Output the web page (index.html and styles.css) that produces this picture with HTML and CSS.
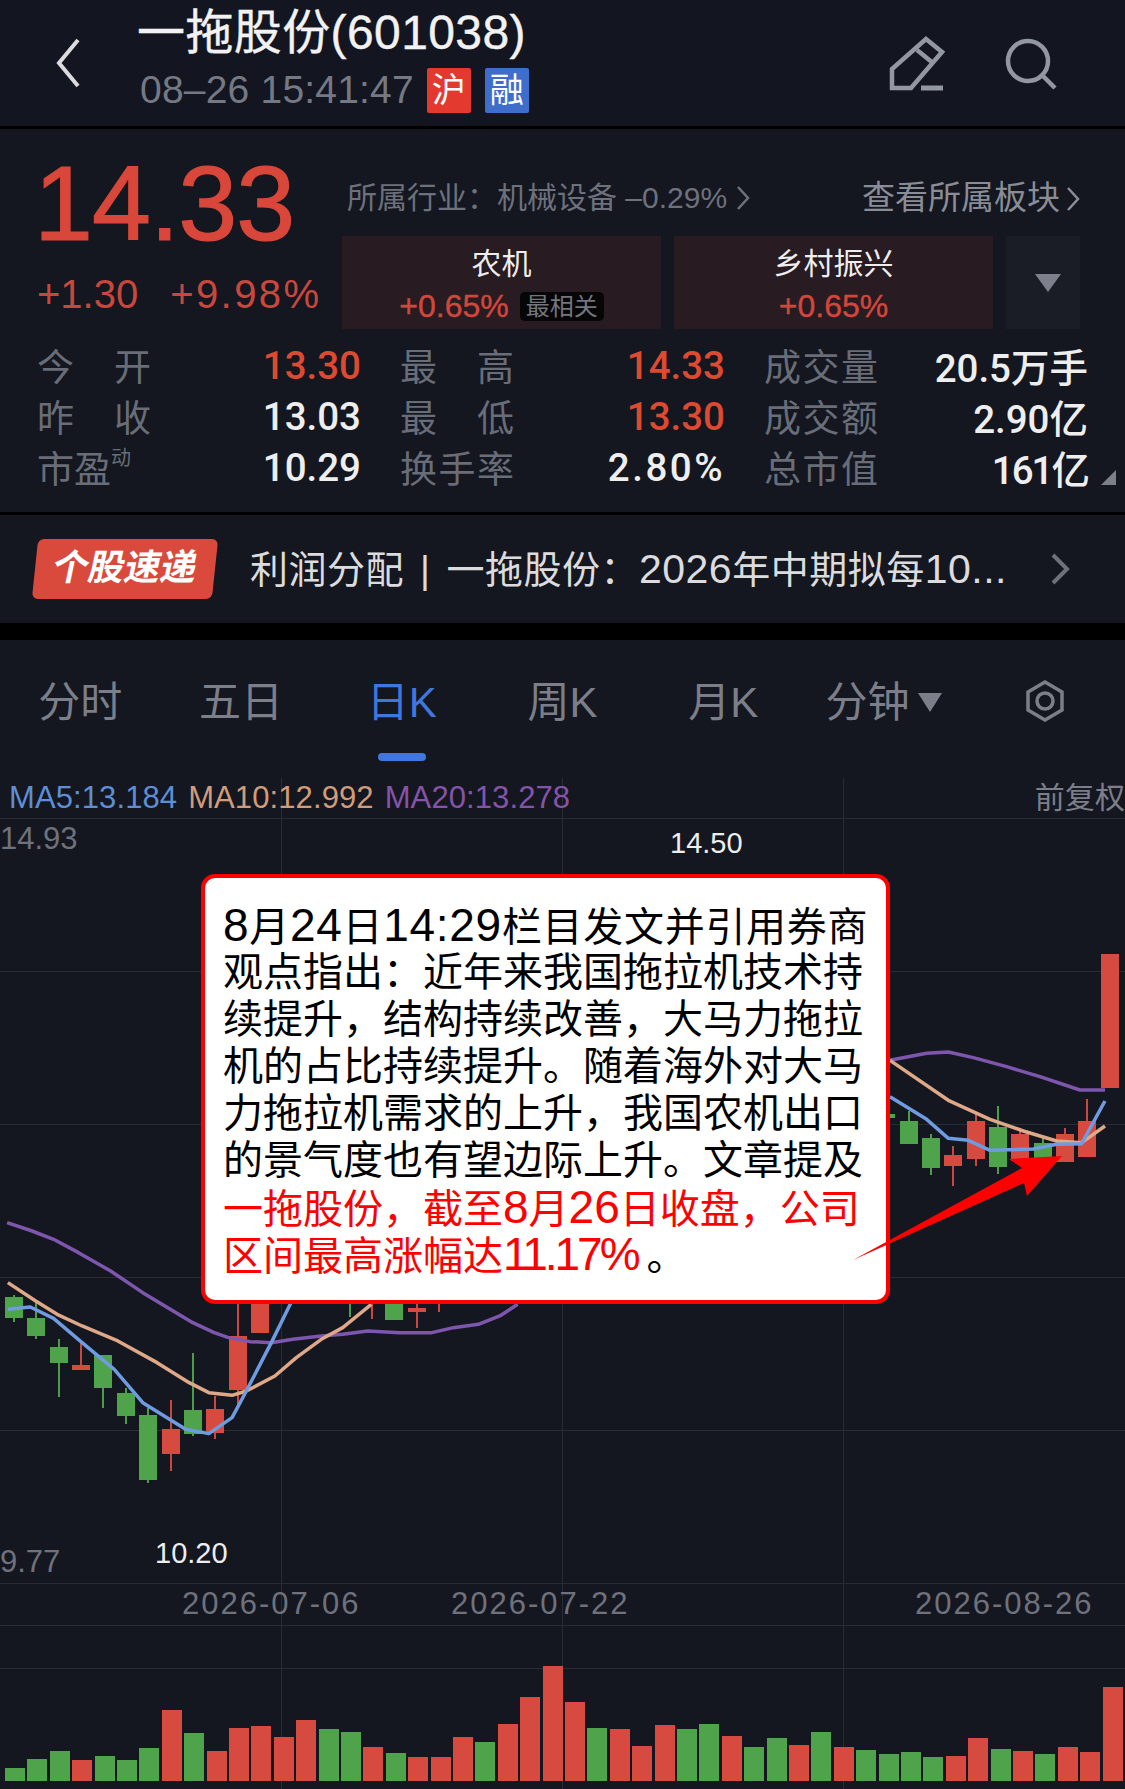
FILE: index.html

```html
<!DOCTYPE html>
<html lang="zh-CN">
<head>
  <meta charset="utf-8">
  <link rel="stylesheet" href="styles.css">
</head>
<body>
  <div class="page">
    <header class="topbar">
      <svg class="back-icon" width="24" height="50" viewBox="0 0 24 50"><path d="M22 2L3 25l19 23"/></svg>
      <div class="title-block">
        <div class="stock-name">一拖股份(601038)</div>
        <div class="stock-time">
          <span>08–26 15:41:47</span>
          <span class="tag tag-red">沪</span>
          <span class="tag tag-blue">融</span>
        </div>
      </div>
      <svg class="edit-icon" width="56" height="56" viewBox="0 0 56 56"><path d="M37 3L53 16 22 52H3V33z"/><path d="M28 14l16 13"/><path d="M32 52h22" class="thick"/></svg>
      <svg class="search-icon" width="52" height="52" viewBox="0 0 52 52"><circle cx="23" cy="23" r="20"/><path d="M38 38l12 12"/></svg>
    </header>

    <section class="quote">
      <div class="hero">
        <div class="price-col">
          <div class="price">14.33</div>
          <div class="change"><span>+1.30</span><span class="change-pct">+9.98%</span></div>
        </div>
        <div class="info-col">
          <div class="industry-row">
            <span class="industry">所属行业&#65306;机械设备 –0.29%<svg class="mini-chevron" width="14" height="26" viewBox="0 0 14 26"><path d="M2 2l10 11L2 24"/></svg></span>
            <span class="sector-link">查看所属板块<svg class="mini-chevron" width="14" height="26" viewBox="0 0 14 26"><path d="M2 2l10 11L2 24"/></svg></span>
          </div>
          <div class="sector-cards">
            <div class="sector-card">
              <div class="sector-name">农机</div>
              <div class="sector-pct">+0.65%<span class="best-tag">最相关</span></div>
            </div>
            <div class="sector-card">
              <div class="sector-name">乡村振兴</div>
              <div class="sector-pct">+0.65%</div>
            </div>
            <div class="sector-more"><span class="tri-down"></span></div>
          </div>
        </div>
      </div>

      <div class="stats">
        <div class="stat"><span class="stat-label spread"><i>今</i><i>开</i></span><span class="stat-value red">13.30</span></div>
        <div class="stat"><span class="stat-label spread"><i>最</i><i>高</i></span><span class="stat-value red">14.33</span></div>
        <div class="stat"><span class="stat-label spread"><i>成</i><i>交</i><i>量</i></span><span class="stat-value">20.5万手</span></div>
        <div class="stat"><span class="stat-label spread"><i>昨</i><i>收</i></span><span class="stat-value">13.03</span></div>
        <div class="stat"><span class="stat-label spread"><i>最</i><i>低</i></span><span class="stat-value red">13.30</span></div>
        <div class="stat"><span class="stat-label spread"><i>成</i><i>交</i><i>额</i></span><span class="stat-value">2.90亿</span></div>
        <div class="stat"><span class="stat-label">市盈<sup>动</sup></span><span class="stat-value">10.29</span></div>
        <div class="stat"><span class="stat-label spread"><i>换</i><i>手</i><i>率</i></span><span class="stat-value wide">2.80%</span></div>
        <div class="stat"><span class="stat-label spread"><i>总</i><i>市</i><i>值</i></span><span class="stat-value narrow">161亿</span></div>
      </div>
      <span class="corner-mark"></span>
    </section>

    <section class="news">
      <div class="news-badge"><span>个股速递</span></div>
      <div class="news-text">利润分配<span class="news-sep">|</span>一拖股份&#65306;<span class="news-num">2026</span>年中期拟每<span class="news-num">10...</span></div>
      <svg class="news-chevron" width="20" height="32" viewBox="0 0 20 32"><path d="M3 2l14 14L3 30"/></svg>
    </section>

    <section class="kline">
      <nav class="tabs">
        <div class="tab">分时</div>
        <div class="tab">五日</div>
        <div class="tab active">日K</div>
        <div class="tab">周K</div>
        <div class="tab">月K</div>
        <div class="tab">分钟<span class="tab-caret"></span></div>
        <div class="tab">
          <svg class="hex-icon" width="40" height="42" viewBox="0 0 40 42"><path d="M20 2l17 10v18L20 40 3 30V12z"/><circle cx="20" cy="21" r="8"/></svg>
        </div>
      </nav>
      <div class="tab-line"></div>

      <div class="chart">
        <svg class="chart-svg" width="1125" height="1012" viewBox="0 777 1125 1012">
          <path class="grid" d="M0 817.5H1125M0 970.5H1125M0 1123.5H1125M0 1276.5H1125M0 1429.5H1125M0 1582.5H1125M0 1624.5H1125M0 1667.5H1125M281.5 777V1789M562.5 777V1789M843.5 777V1789"/>

          <!-- candles -->
          <path class="wick-down" d="M14 1294V1321M36 1302V1338M59 1338V1396M103 1354V1407M126 1387V1423M148 1407V1482M193 1352V1435M350 1290V1316M909 1110V1143M931 1133V1174M998 1105V1173M1043 1137V1160"/>
          <path class="wick-up" d="M81 1340V1369M171 1399V1470M215 1395V1438M238 1290V1407M372 1290V1318M417 1290V1327M439 1290V1311M953 1145V1185M976 1113V1165M1020 1130V1160M1065 1127V1161M1087 1098V1156"/>
          <path class="down" d="M5 1296h18v21H5zM27 1317h18v18H27zM50 1346h18v16H50zM94 1354h18v33H94zM117 1392h18v23h-18zM139 1414h18v65h-18zM184 1409h18v24h-18zM385 1290h18v29h-18zM877 1113h18v4h-18zM900 1120h18v23h-18zM922 1137h18v30h-18zM989 1126h18v40h-18zM1034 1142h18v18h-18z"/>
          <path class="up" d="M72 1364h18v5H72zM162 1428h18v25h-18zM206 1408h18v24h-18zM229 1335h18v54h-18zM251 1280h18v52h-18zM408 1307h18v4h-18zM944 1154h18v11h-18zM967 1120h18v38h-18zM1011 1133h18v27h-18zM1056 1133h18v28h-18zM1078 1120h18v36h-18zM1101 953h18v134h-18z"/>

          <!-- moving averages, left part -->
          <g transform="translate(0 1180) scale(.357 .3333)">
            <polyline class="ma ma20" points="20,125 90,150 150,175 220,215 310,270 400,335 470,380 540,425 600,455 640,470 700,482 760,485 820,475 900,465 960,460 1030,450 1120,455 1210,455 1270,440 1340,430 1400,405 1450,370"/>
            <polyline class="ma ma10" points="22,305 100,360 160,400 230,435 330,480 440,545 530,605 585,635 650,643 690,630 770,585 830,530 900,475 960,440 1040,370"/>
            <polyline class="ma ma5" points="22,385 85,378 150,412 230,485 320,565 400,665 460,705 520,745 585,758 650,710 690,630 760,485 815,365"/>
          </g>
          <!-- moving averages, right part -->
          <g transform="translate(840 930) scale(.3333)">
            <polyline class="ma ma20" points="150,388 260,367 325,363 400,380 500,407 600,437 720,477 795,477"/>
            <polyline class="ma ma10" points="150,388 325,508 450,565 550,600 650,630 725,635 795,585"/>
            <polyline class="ma ma5" points="150,497 260,565 325,622 385,628 450,658 580,654 650,640 725,638 795,510"/>
          </g>

          <!-- volume -->
          <path class="up" d="M72 1759h20V1780h-20zM162 1709h20V1780h-20zM207 1750h20V1780h-20zM229 1727h20V1780h-20zM251 1725h20V1780h-20zM274 1736h20V1780h-20zM296 1719h20V1780h-20zM363 1746h20V1780h-20zM408 1756h20V1780h-20zM431 1756h20V1780h-20zM453 1736h20V1780h-20zM498 1723h20V1780h-20zM520 1696h20V1780h-20zM543 1665h20V1780h-20zM565 1701h20V1780h-20zM610 1728h20V1780h-20zM632 1745h20V1780h-20zM655 1724h20V1780h-20zM722 1735h20V1780h-20zM789 1744h20V1780h-20zM834 1746h20V1780h-20zM946 1755h20V1780h-20zM968 1737h20V1780h-20zM1013 1750h20V1780h-20zM1058 1746h20V1780h-20zM1080 1751h20V1780h-20zM1103 1686h20V1780h-20z"/>
          <path class="down" d="M5 1767h20V1780H5zM27 1758h20V1780H27zM50 1750h20V1780H50zM95 1755h20V1780H95zM117 1759h20V1780h-20zM139 1747h20V1780h-20zM184 1732h20V1780h-20zM319 1728h20V1780h-20zM341 1731h20V1780h-20zM386 1752h20V1780h-20zM475 1741h20V1780h-20zM587 1727h20V1780h-20zM677 1728h20V1780h-20zM699 1723h20V1780h-20zM744 1746h20V1780h-20zM767 1737h20V1780h-20zM811 1731h20V1780h-20zM856 1749h20V1780h-20zM879 1753h20V1780h-20zM901 1751h20V1780h-20zM923 1756h20V1780h-20zM991 1748h20V1780h-20zM1035 1753h20V1780h-20z"/>
        </svg>

        <div class="ma-legend">
          <span class="c-ma5">MA5:13.184</span>
          <span class="c-ma10">MA10:12.992</span>
          <span class="c-ma20">MA20:13.278</span>
          <span class="adjust">前复权</span>
        </div>
        <div class="axis-label high-axis">14.93</div>
        <div class="axis-label low-axis">9.77</div>
        <div class="peak-label peak-high">14.50</div>
        <div class="peak-label peak-low">10.20</div>
        <div class="date-label date-a">2026-07-06</div>
        <div class="date-label date-b">2026-07-22</div>
        <div class="date-label date-c">2026-08-26</div>

        <div class="callout">
          <div class="line-first"><span class="num">8</span>月<span class="num">24</span>日<span class="num">14:29</span>栏目发文并引用券商</div>
          <div>观点指出&#65306;近年来我国拖拉机技术持</div>
          <div>续提升&#65292;结构持续改善&#65292;大马力拖拉</div>
          <div>机的占比持续提升。随着海外对大马</div>
          <div>力拖拉机需求的上升&#65292;我国农机出口</div>
          <div>的景气度也有望边际上升。文章提及</div>
          <div class="hl">一拖股份&#65292;截至<span class="num">8</span>月<span class="num">26</span>日收盘&#65292;公司</div>
          <div><span class="hl">区间最高涨幅达<span class="num tight">11.17%</span></span>。</div>
        </div>

        <svg class="arrow" width="1125" height="1012" viewBox="0 777 1125 1012">
          <polygon points="853,1259 1022,1167 1009,1158 1062,1155 1027,1195 1024,1182"/>
        </svg>
      </div>
    </section>
  </div>
</body>
</html>
```

FILE: styles.css

```css
* {
  box-sizing: border-box;
}
body {
  margin: 0;
  background: #000;
  font-family: "Liberation Sans", "Noto Sans CJK SC", sans-serif;
  color: #e8e8ea;
}
svg {
  display: block;
}
svg path, svg circle {
  fill: none;
}
.page {
  width: 1125px;
  height: 1789px;
  overflow: hidden;
  background: #000;
}

/* top bar */
.topbar {
  height: 126px;
  background: #131620;
  display: flex;
  align-items: center;
  position: relative;
  padding-left: 56px;
}
.back-icon path {
  stroke: #dcdcdf;
  stroke-width: 4;
}
.title-block {
  margin-left: 57px;
  width: 752px;
  margin-top: -2px;
}
.stock-name {
  font-size: 48px;
  line-height: 60px;
  margin-top: -8px;
  letter-spacing: 0.4px;
  color: #f2f2f3;
  -webkit-text-stroke: 0.4px #f2f2f3;
}
.stock-time {
  display: flex;
  align-items: center;
  font-size: 39px;
  line-height: 46px;
  letter-spacing: 0.2px;
  color: #757984;
  margin-top: 4px;
  padding-left: 3px;
}
.tag {
  width: 44px;
  height: 45px;
  border-radius: 2px;
  color: #fff;
  font-size: 34px;
  line-height: 44px;
  text-align: center;
  margin-left: 14px;
}
.tag-red {
  background: #e3392f;
  margin-left: 13px;
}
.tag-blue {
  background: #3e6dcb;
}
.edit-icon {
  margin-top: 1px;
}
.edit-icon path, .search-icon circle, .search-icon path {
  stroke: #9397a1;
  stroke-width: 4.5;
}
.edit-icon .thick {
  stroke-width: 5;
}
.search-icon {
  margin-left: 60px;
  margin-top: 2px;
}

/* quote block */
.quote {
  height: 383px;
  margin-top: 3px;
  background: #141720;
  position: relative;
  padding-left: 37px;
}
.hero {
  display: flex;
  height: 210px;
}
.price-col {
  width: 305px;
  padding-top: 21px;
  margin-left: -3px;
}
.price {
  font-size: 106px;
  line-height: 106px;
  letter-spacing: -1px;
  color: #d9473a;
  -webkit-text-stroke: 1.2px #d9473a;
}
.change {
  display: flex;
  gap: 32px;
  font-size: 40px;
  line-height: 46px;
  margin-top: 15px;
  margin-left: 3px;
  color: #c9473d;
}
.change-pct {
  letter-spacing: 2.4px;
}
.info-col {
  width: 738px;
  margin-left: 3px;
}
.industry-row {
  display: flex;
  align-items: center;
  justify-content: space-between;
  height: 50px;
  margin-top: 41px;
  padding-left: 5px;
  color: #6d717c;
  font-size: 30px;
}
.mini-chevron {
  display: inline-block;
  margin-left: 9px;
  vertical-align: -3px;
}
.mini-chevron path {
  stroke: currentColor;
  stroke-width: 2.5;
}
.sector-link {
  font-size: 33px;
  color: #8a8d96;
  white-space: nowrap;
}
.sector-link .mini-chevron {
  margin-left: 6px;
}
.sector-cards {
  display: flex;
  gap: 13px;
  margin-top: 16px;
}
.sector-card {
  width: 319px;
  height: 93px;
  background: #281b21;
  text-align: center;
}
.sector-name {
  font-size: 30px;
  line-height: 36px;
  margin-top: 10px;
  color: #eeeeef;
}
.sector-pct {
  display: flex;
  justify-content: center;
  align-items: center;
  font-size: 32px;
  line-height: 40px;
  margin-top: 4px;
  color: #d2473c;
  -webkit-text-stroke: 0.4px #d2473c;
}
.best-tag {
  font-size: 24px;
  line-height: 29px;
  width: 84px;
  margin-left: 11px;
  border-radius: 5px;
  background: #060607;
  color: #73767f;
  -webkit-text-stroke: 0;
}
.sector-more {
  width: 74px;
  height: 93px;
  background: #1a1d26;
  display: flex;
  align-items: center;
  justify-content: center;
  padding-left: 10px;
}
.tri-down {
  width: 0;
  height: 0;
  border-left: 13px solid transparent;
  border-right: 13px solid transparent;
  border-top: 18px solid #7d808b;
}
.stats {
  display: grid;
  grid-template-columns: 324px 325px 324px;
  column-gap: 39px;
  grid-auto-rows: 51px;
}
.stat {
  display: flex;
  justify-content: space-between;
  align-items: center;
  font-size: 38px;
}
.stat-label {
  width: 114px;
  color: #696d78;
  font-size: 37px;
  white-space: nowrap;
}
.spread {
  display: flex;
  justify-content: space-between;
}
.spread i {
  font-style: normal;
}
.stat-label sup {
  font-size: 20px;
  line-height: 0;
  vertical-align: 18px;
}
.stat-value {
  font-family: Roboto, "Noto Sans CJK SC", sans-serif;
  font-weight: 500;
  font-size: 38.5px;
  padding-top: 1px;
  color: #eeeeef;
  white-space: nowrap;
}
.stat-value.red {
  color: #dd4a30;
}
.stat-value.wide {
  letter-spacing: 2.5px;
}
.stat-value.narrow {
  letter-spacing: -2px;
}
.corner-mark {
  position: absolute;
  right: 9px;
  bottom: 27px;
  width: 0;
  height: 0;
  border-left: 15px solid transparent;
  border-bottom: 15px solid #7d808b;
}

/* news */
.news {
  height: 108px;
  margin-top: 3px;
  background: #141720;
  display: flex;
  align-items: center;
  padding-left: 35px;
}
.news-badge {
  width: 180px;
  height: 60px;
  background: #d94a3c;
  border-radius: 6px;
  transform: skewX(-6deg);
  text-align: center;
  color: #fff;
  font-size: 36px;
  font-weight: 700;
  line-height: 58px;
}
.news-badge span {
  display: inline-block;
  transform: skewX(-6deg);
}
.news-text {
  width: 802px;
  margin-left: 35px;
  font-size: 38px;
  line-height: 50px;
  letter-spacing: 0.5px;
  white-space: nowrap;
  color: #dcdcde;
}
.news-sep {
  margin: 0 16px;
}
.news-num {
  font-size: 41px;
}
.news-chevron {
  margin-left: -2px;
}
.news-chevron path {
  stroke: #6d717c;
  stroke-width: 4;
}

/* k-line area */
.kline {
  margin-top: 17px;
  height: 1150px;
  background: #141720;
  position: relative;
}
.tabs {
  display: grid;
  grid-template-columns: repeat(7, 1fr);
  height: 113px;
  padding-top: 4px;
  align-items: center;
}
.tab {
  display: flex;
  justify-content: center;
  align-items: center;
  height: 60px;
  font-size: 42px;
  color: #7c7f89;
}
.tab.active {
  color: #3f77de;
}
.tab-caret {
  width: 0;
  height: 0;
  margin-left: 9px;
  margin-top: 8px;
  border-left: 12px solid transparent;
  border-right: 12px solid transparent;
  border-top: 19px solid #7c7f89;
}
.hex-icon {
  margin-top: 4px;
}
.hex-icon path, .hex-icon circle {
  stroke: #7c7f89;
  stroke-width: 3.5;
}
.tab-line {
  position: absolute;
  left: 378px;
  top: 113px;
  width: 48px;
  height: 8px;
  border-radius: 4px;
  background: #3f77de;
}
.chart {
  position: relative;
  margin-top: 25px;
  height: 1012px;
}
.chart-svg .grid {
  stroke: #292c35;
  stroke-width: 1;
}
.wick-up, .wick-down {
  stroke-width: 2;
}
svg path.wick-up {
  stroke: #c9473e;
}
svg path.wick-down {
  stroke: #4c9c4a;
}
svg path.up {
  fill: #d74a40;
}
svg path.down {
  fill: #4ea34b;
}
.ma {
  fill: none;
  stroke-width: 3.5;
  vector-effect: non-scaling-stroke;
  stroke-linejoin: round;
}
.ma5 {
  stroke: #6f9be0;
}
.ma10 {
  stroke: #dfa888;
}
.ma20 {
  stroke: #7f56ad;
}
.ma-legend {
  position: absolute;
  left: 9px;
  top: 2px;
  width: 1116px;
  display: flex;
  gap: 11px;
  font-size: 31px;
  letter-spacing: 0.1px;
  line-height: 36px;
  white-space: nowrap;
}
.c-ma5 {
  color: #5e8ed6;
}
.c-ma10 {
  color: #d29b7a;
}
.c-ma20 {
  color: #8554a8;
}
.adjust {
  margin-left: auto;
  font-size: 30px;
  color: #7c7f89;
}
.axis-label, .peak-label, .date-label {
  position: absolute;
  font-size: 29px;
  line-height: 34px;
  white-space: nowrap;
}
.axis-label {
  left: 0;
  font-size: 31px;
  color: #6f727c;
}
.high-axis {
  top: 44px;
}
.low-axis {
  top: 767px;
}
.peak-label {
  color: #eeeeef;
}
.peak-high {
  left: 670px;
  top: 48px;
}
.peak-low {
  left: 155px;
  top: 758px;
}
.date-label {
  top: 809px;
  font-size: 31px;
  letter-spacing: 2px;
  color: #6f727c;
}
.date-a {
  left: 182px;
}
.date-b {
  left: 451px;
}
.date-c {
  left: 915px;
}
.callout {
  position: absolute;
  left: 201px;
  top: 96px;
  width: 689px;
  height: 430px;
  background: #fff;
  border: 4px solid #f00;
  border-radius: 14px;
  padding: 24px 0 0 18px;
  color: #000;
  font-size: 40px;
  line-height: 47px;
  white-space: nowrap;
}
.callout div {
  height: 47px;
}
.callout .line-first {
  letter-spacing: 0.7px;
}
.num {
  font-size: 46px;
}
.num.tight {
  letter-spacing: -3px;
  margin-right: 9px;
}
.hl {
  color: #f00;
}
.arrow {
  position: absolute;
  left: 0;
  top: 0;
}
.arrow polygon {
  fill: #f00;
}
```
